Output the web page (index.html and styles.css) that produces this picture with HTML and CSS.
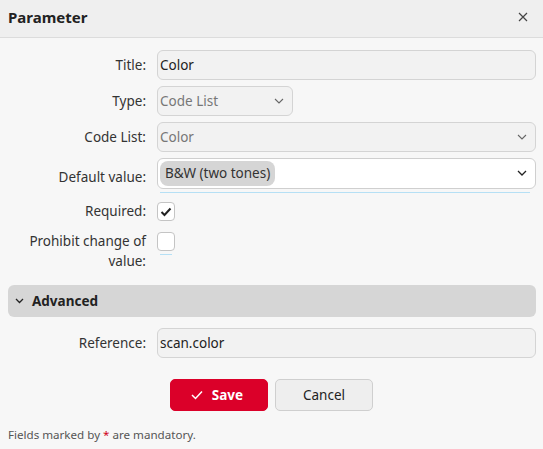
FILE: index.html
```html
<!DOCTYPE html>
<html>
<head>
<meta charset="utf-8">
<link rel="stylesheet" href="styles.css">
</head>
<body>
<div class="dialog">
  <div class="header">
    <span class="title">Parameter</span>
    <svg class="close" width="10" height="10" viewBox="0 0 10 10"><path d="M1 1L9 9M9 1L1 9" stroke="#444" stroke-width="1.2"/></svg>
  </div>
  <div class="form">
    <label class="lbl">Title:</label>
    <div class="field"><div class="input">Color</div></div>

    <label class="lbl">Type:</label>
    <div class="field"><div class="input select short muted">Code List<svg class="chev" width="10" height="6" viewBox="0 0 10 6"><path d="M1 1L5 5L9 1" fill="none" stroke="#666" stroke-width="1.1"/></svg></div></div>

    <label class="lbl">Code List:</label>
    <div class="field"><div class="input select muted">Color<svg class="chev" width="10" height="6" viewBox="0 0 10 6"><path d="M1 1L5 5L9 1" fill="none" stroke="#666" stroke-width="1.1"/></svg></div></div>

    <label class="lbl">Default value:</label>
    <div class="field"><div class="input select white"><span class="chip">B&amp;W (two tones)</span><svg class="chev" width="10" height="6" viewBox="0 0 10 6"><path d="M1 1L5 5L9 1" fill="none" stroke="#222" stroke-width="1.3"/></svg></div><div class="uline"></div></div>

    <label class="lbl lbl-cb">Required:</label>
    <div class="field cbrow"><span class="cb"><svg width="12" height="10" viewBox="0 0 12 10"><path d="M1.5 5L4.5 8L10.5 1.5" fill="none" stroke="#222" stroke-width="2"/></svg></span></div>

    <label class="lbl lbl-cb">Prohibit change of value:</label>
    <div class="field cbrow"><span class="cb"></span><div class="cbline"></div></div>
  </div>

  <div class="adv">
    <svg width="9" height="6" viewBox="0 0 9 6"><path d="M1 1L4.5 4.5L8 1" fill="none" stroke="#222" stroke-width="1.3"/></svg>
    <span>Advanced</span>
  </div>

  <div class="form form2">
    <label class="lbl">Reference:</label>
    <div class="field"><div class="input">scan.color</div></div>
  </div>

  <div class="buttons">
    <button class="btn save"><svg width="12" height="10" viewBox="0 0 12 10"><path d="M1 5L4.5 8.5L11 1.5" fill="none" stroke="#fff" stroke-width="1.5"/></svg>Save</button>
    <button class="btn cancel">Cancel</button>
  </div>

  <div class="foot">Fields marked by <span class="req">*</span> are mandatory.</div>
</div>
</body>
</html>
```
FILE: styles.css
```css
* { box-sizing: border-box; }
html, body { margin: 0; padding: 0; }
body {
  background: #f7f7f7;
  font-family: "Noto Sans", "Open Sans", sans-serif;
  font-size: 13.5px;
  color: #222;
  width: 543px;
  height: 449px;
  overflow: hidden;
}
.header {
  height: 38px;
  background: #efefef;
  border-bottom: 1px solid #dcdcdc;
  display: flex;
  align-items: center;
  justify-content: space-between;
  padding: 0 15px 3px 8px;
}
.title { font-weight: 700; font-size: 15px; color: #222; }
.close { margin-top: -1px; }
.form {
  display: grid;
  grid-template-columns: 146px 1fr;
  column-gap: 11px;
  row-gap: 6px;
  padding: 12px 7px 0 0;
}
.lbl {
  text-align: right;
  color: #333;
  display: flex;
  align-items: center;
  justify-content: flex-end;
  line-height: 20px;
}
.lbl-cb { align-items: flex-start; margin-top: -1px; }
.field { position: relative; }
.input {
  height: 30px;
  border: 1px solid #d4d4d4;
  border-radius: 6px;
  background: #f2f2f2;
  display: flex;
  align-items: center;
  padding: 0 6px 1px 2px;
  color: #222;
}
.muted { color: #777; }
.select { justify-content: space-between; padding-right: 8px; }
.short { width: 136px; }
.chev { flex: none; }
.white { background: #fff; height: 31px; border-color: #cfcfcf; padding-left: 2px; }
.chip {
  background: #d5d5d5;
  border-radius: 8px;
  padding: 3px 5px 4px 5px;
  color: #333;
}
.uline {
  height: 1px;
  background: #b6e0f5;
  margin: 3px 6px 3px 3px;
}
.cbrow { min-height: 24px; }
.cb {
  display: flex;
  width: 18px;
  height: 19px;
  border: 1px solid #c4c4c4;
  border-radius: 4px;
  background: #fff;
  align-items: center;
  justify-content: center;
}
.cbline { width: 12px; height: 1px; background: #b6e0f5; margin: 3px 0 0 3px; }
.adv {
  margin: 14px 7px 0 8px;
  height: 32px;
  background: #d6d6d6;
  border-radius: 6px;
  display: flex;
  align-items: center;
  gap: 8px;
  padding-left: 7px;
  font-weight: 700;
  font-size: 13.5px;
  color: #222;
}
.form2 { padding-top: 11px; }
.buttons {
  display: flex;
  justify-content: center;
  gap: 7px;
  margin-top: 21px;
}
.btn {
  width: 98px;
  height: 32px;
  border-radius: 5px;
  font-family: inherit;
  font-size: 13.5px;
  display: flex;
  align-items: center;
  justify-content: center;
}
.save {
  background: #db0029;
  border: 1px solid #db0029;
  color: #fff;
  font-weight: 700;
  gap: 9px;
  padding-right: 10px;
}
.cancel {
  background: #eeeeee;
  border: 1px solid #cfcfcf;
  color: #222;
}
.foot {
  margin: 16px 0 0 8px;
  font-size: 11.6px;
  color: #555;
}
.req { color: #d0021b; }
```
